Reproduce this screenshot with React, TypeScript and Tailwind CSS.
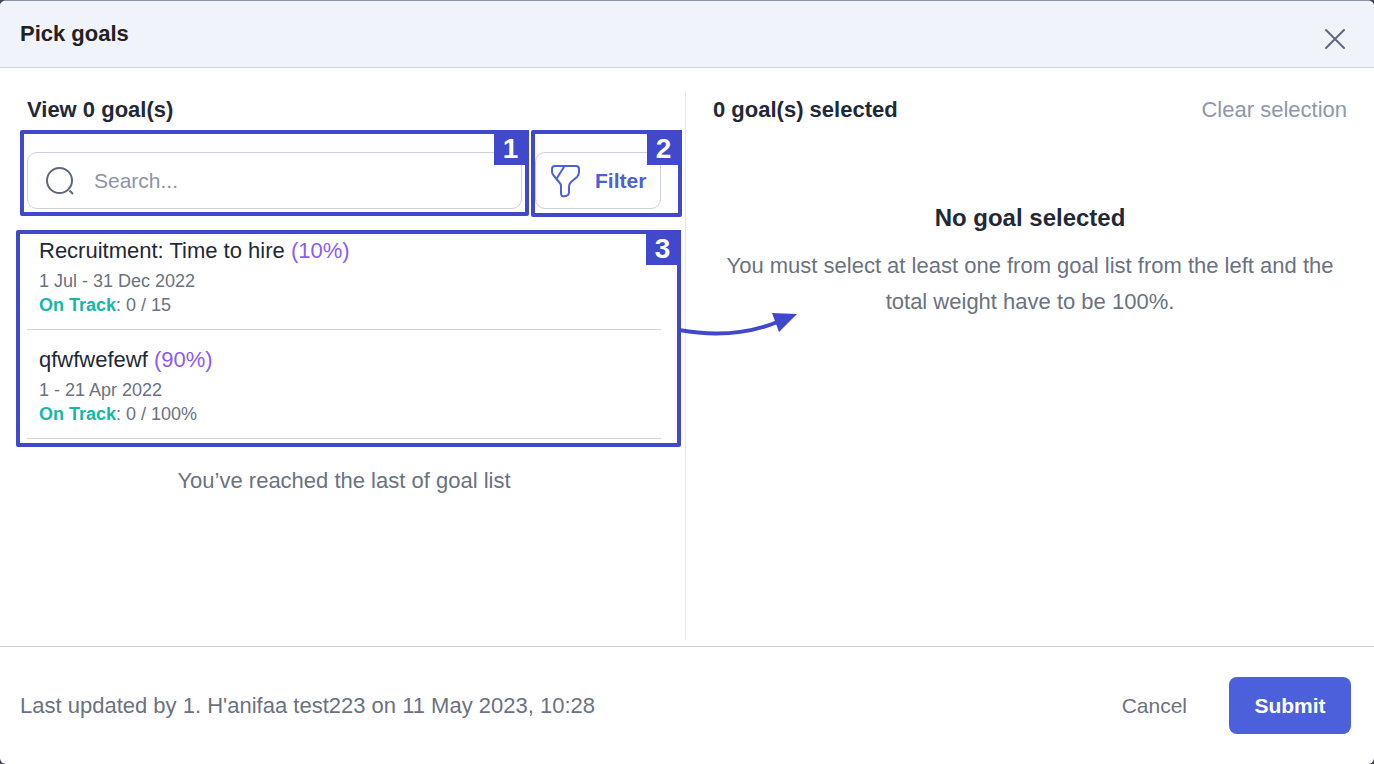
import { useState } from 'react';

interface Goal {
  id: number;
  title: string;
  weight: number;
  period: string;
  status: string;
  progress: string;
}

const GOALS: Goal[] = [
  { id: 1, title: 'Recruitment: Time to hire', weight: 10, period: '1 Jul - 31 Dec 2022', status: 'On Track', progress: '0 / 15' },
  { id: 2, title: 'qfwfwefewf', weight: 90, period: '1 - 21 Apr 2022', status: 'On Track', progress: '0 / 100%' },
];

export default function App() {
  const [query, setQuery] = useState('');

  return (
    <div className="min-h-screen bg-[#44464f] font-['Liberation_Sans',Arial,sans-serif] text-[22px] leading-9 text-[#6b7280]">
      <div role="dialog" aria-labelledby="dialog-title" className="flex min-h-screen flex-col overflow-hidden rounded-md border-t border-[#8d93ab] bg-white">
        <header className="flex items-center justify-between border-b border-[#cbd5e1] bg-[#f0f3f9] pr-7 pl-5">
          <h1 id="dialog-title" className="py-[15px] font-bold text-[#222222]">Pick goals</h1>
          <button type="button" aria-label="Close" className="mt-2 text-[#5f687b]">
            <CloseIcon />
          </button>
        </header>

        <main className="grid flex-1 grid-cols-2 pt-6 pr-[22px] pb-1.5 pl-5">
          <section className="border-r border-[#e5e7eb] pr-6 pl-[7px]">
            <h2 className="font-bold text-[#1f2937]">View 0 goal(s)</h2>

            <div className="mt-6 flex gap-[13px]">
              <div className="relative flex-1">
                <label className="flex h-[57px] items-center gap-5 rounded-[10px] border border-[#cbd0dc] pl-[18px]">
                  <SearchIcon />
                  <input
                    type="text"
                    aria-label="Search goals"
                    value={query}
                    onChange={(e) => setQuery(e.target.value)}
                    placeholder="Search..."
                    className="w-full min-w-0 bg-transparent text-[21px] outline-none placeholder:text-[#8b95a7]"
                  />
                </label>
                <Callout n={1} className="-top-[22px] -right-[7px] -bottom-[7px] -left-[7px]" />
              </div>
              <div className="relative">
                <button
                  type="button"
                  className="flex h-[57px] w-[126px] items-center gap-[14px] rounded-[10px] border border-[#cbd0dc] pl-[15px] text-[21px] font-bold text-[#4c60dc]"
                >
                  <FilterIcon />
                  Filter
                </button>
                <Callout n={2} className="-top-[22px] -right-[21px] -bottom-2 -left-1" />
              </div>
            </div>

            <div className="relative mt-3">
              <ul>
                {GOALS.map((goal) => (
                  <GoalRow key={goal.id} goal={goal} />
                ))}
              </ul>
              <Callout n={3} className="top-[9px] -right-5 -bottom-2 -left-[11px]" />
              <Arrow />
            </div>

            <p className="mt-6 text-center">You’ve reached the last of goal list</p>
          </section>

          <section className="pr-[5px] pl-[27px]">
            <div className="flex items-center justify-between">
              <h2 className="font-bold text-[#1f2937]">0 goal(s) selected</h2>
              <button type="button" className="text-[#8f98aa]">Clear selection</button>
            </div>
            <div className="px-2 pt-[72px] text-center">
              <h3 className="text-2xl leading-9 font-bold text-[#1f2937]">No goal selected</h3>
              <p className="mt-3">
                You must select at least one from goal list from the left and the total weight have to be 100%.
              </p>
            </div>
          </section>
        </main>

        <footer className="flex h-[118px] items-center justify-between border-t border-[#cbd5e1] pr-[23px] pl-5">
          <p>Last updated by 1. H'anifaa test223 on 11 May 2023, 10:28</p>
          <div className="flex items-center gap-[42px] text-[21px]">
            <button type="button">Cancel</button>
            <button type="button" className="h-[57px] w-[122px] rounded-lg bg-[#4c60dc] font-bold text-white">
              Submit
            </button>
          </div>
        </footer>
      </div>
    </div>
  );
}

function GoalRow({ goal }: { goal: Goal }) {
  return (
    <li className="border-b border-[#cfd3e0] py-3 pl-3 text-[18px] leading-6">
      <h3 className="text-[22px] leading-9 text-[#1f2937]">
        {goal.title} <span className="text-[#8b5cf6]">({goal.weight}%)</span>
      </h3>
      <p>{goal.period}</p>
      <p>
        <b className="text-[#14b8a6]">{goal.status}</b>: {goal.progress}
      </p>
    </li>
  );
}

// numbered outline drawn over a part of the dialog
function Callout({ n, className }: { n: number; className: string }) {
  return (
    <div className={`pointer-events-none absolute rounded-xs border-4 border-[#4048cc] ${className}`}>
      <span className="absolute -top-1 -right-1 flex h-[35px] w-[35px] items-center justify-center bg-[#4048cc] pt-0.5 pr-0.5 text-[28px] font-bold text-white">
        {n}
      </span>
    </div>
  );
}

function Arrow() {
  return (
    <svg className="pointer-events-none absolute top-[88px] -right-[138px]" width="120" height="32" viewBox="0 0 120 32" fill="none" aria-hidden="true">
      <path d="M0 21 Q56 31 101 12" stroke="#4048cc" strokeWidth="4" />
      <path d="M93 4 L118 5 L100 23 Z" fill="#4048cc" />
    </svg>
  );
}

function CloseIcon() {
  return (
    <svg width="22" height="22" viewBox="0 0 22 22" fill="none" stroke="currentColor" strokeWidth="2" strokeLinecap="round" aria-hidden="true">
      <path d="M2 3 L20 21 M20 3 L2 21" />
    </svg>
  );
}

function SearchIcon() {
  return (
    <svg className="shrink-0" width="28" height="28" viewBox="0 0 28 28" fill="none" stroke="#5f687b" strokeWidth="2" aria-hidden="true">
      <circle cx="13.500" cy="13.500" r="12.500" />
      <path d="M23.500 23.500 L27 27" />
    </svg>
  );
}

function FilterIcon() {
  return (
    <svg className="shrink-0" width="30" height="34" viewBox="0 0 30 34" fill="none" stroke="currentColor" strokeWidth="2" strokeLinejoin="round" strokeLinecap="round" aria-hidden="true">
      <path d="M4 2 H25 Q28 2 28 5 V8 Q28 11 26 13 L20 18 Q18 20 18 23 V28 Q18 30 17 31 Q14 33 11 32 Q10 31 10 29 V22 Q10 20 8 18 L3 12 Q1 10 1 8 V5 Q1 2 4 2 Z" />
      <path d="M13 3 L6 14" />
    </svg>
  );
}
